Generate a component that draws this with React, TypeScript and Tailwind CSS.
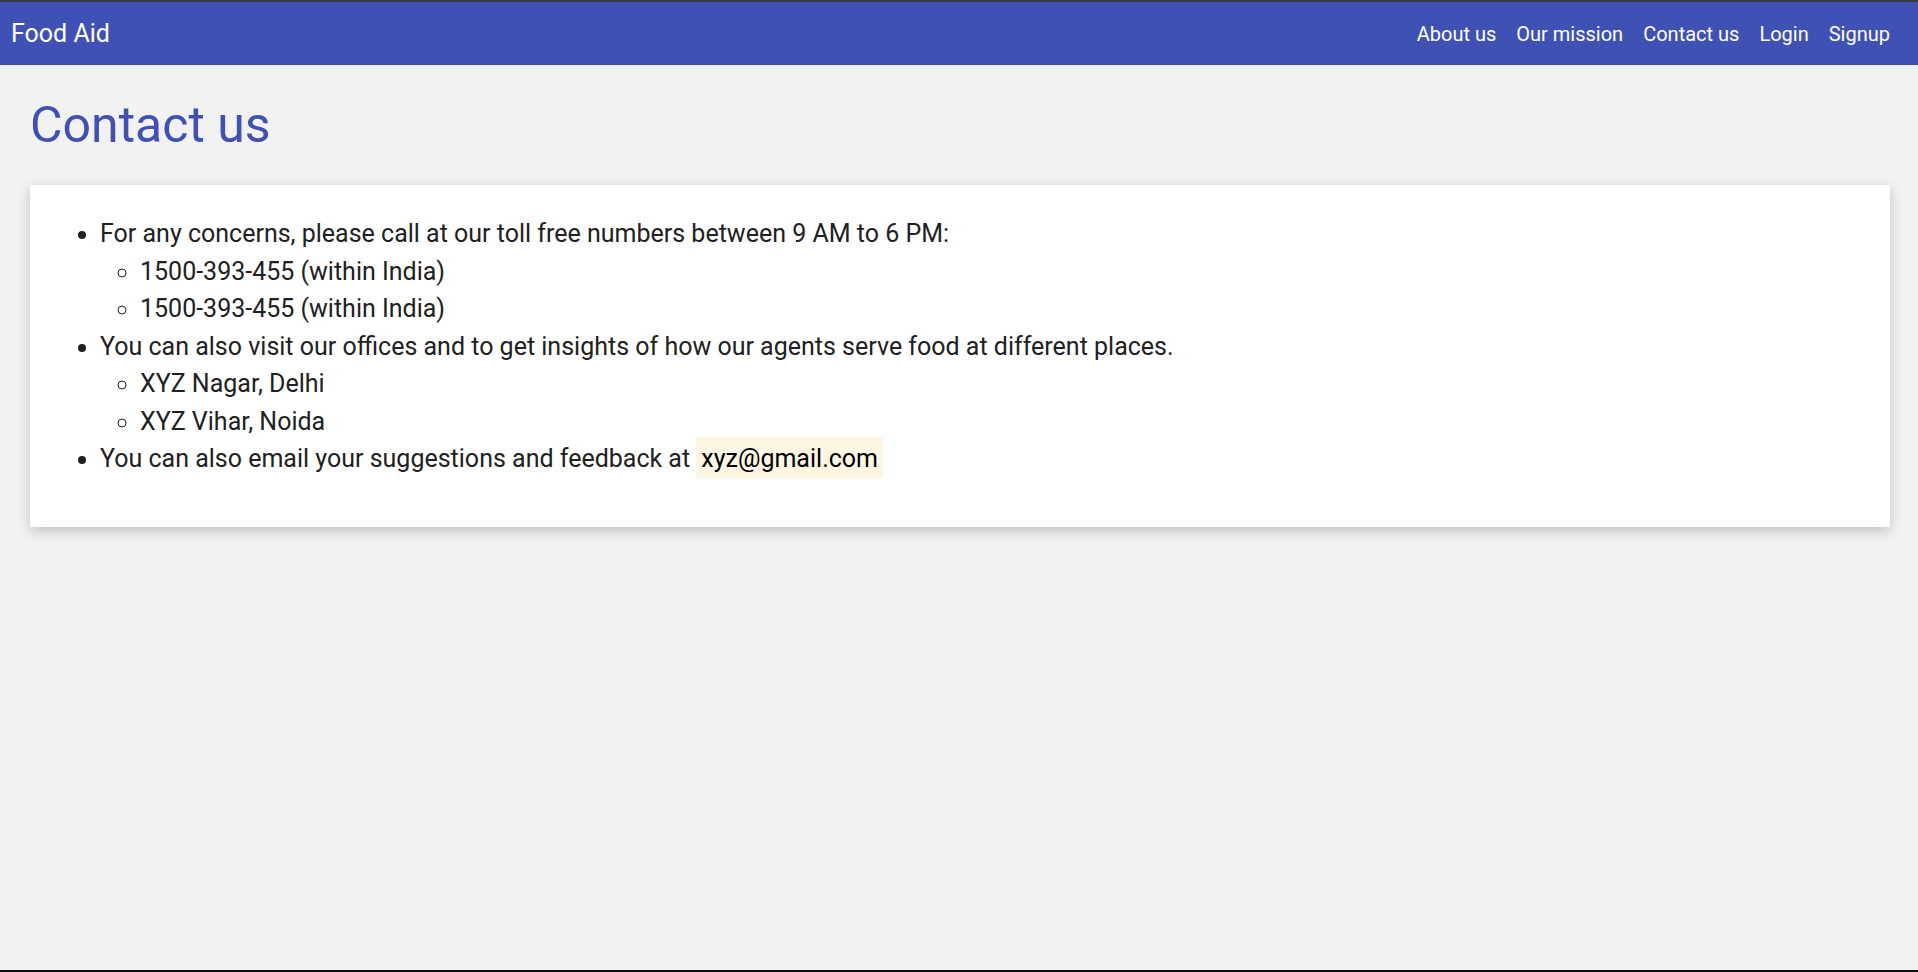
const navLinks = ['About us', 'Our mission', 'Contact us', 'Login', 'Signup']

export default function App() {
  return (
    <div
      className="h-[972px] flex flex-col bg-[#f2f2f2] border-t-2 border-b-2 border-t-[#3a3a3a] border-b-[#111]"
      style={{ fontFamily: 'Roboto, "Noto Sans", sans-serif' }}
    >
      {/* Top bar */}
      <nav className="h-[63px] shrink-0 bg-[#3f51b5] flex items-center justify-between pl-[11px] pr-[18px] text-white">
        <span className="text-[25px]">Food Aid</span>
        <ul className="flex items-center">
          {navLinks.map((link) => (
            <li key={link}>
              <a href="#" className="block px-[10px] text-[20px]">{link}</a>
            </li>
          ))}
        </ul>
      </nav>

      <main className="flex-1 pl-[30px] pr-[28px]">
        <h1 className="mt-[30px] text-[50px] leading-[60px] text-[#3f51b5]">Contact us</h1>

        <div className="mt-[30px] bg-white pt-[30px] pb-[49px] px-[30px] shadow-[0_4px_12px_rgba(0,0,0,0.2)] text-[#212121] text-[25px] leading-[37.5px]">
          <ul className="list-disc pl-[40px]">
            <li>
              For any concerns, please call at our toll free numbers between 9 AM to 6 PM:
              <ul className="list-[circle] pl-[40px]">
                <li>1500-393-455 (within India)</li>
                <li>1500-393-455 (within India)</li>
              </ul>
            </li>
            <li>
              You can also visit our offices and to get insights of how our agents serve food at different places.
              <ul className="list-[circle] pl-[40px]">
                <li>XYZ Nagar, Delhi</li>
                <li>XYZ Vihar, Noida</li>
              </ul>
            </li>
            <li>
              You can also email your suggestions and feedback at{' '}
              <span className="bg-[#fcf6e3] pt-[7px] pb-[5px] px-[5px] text-black">xyz@gmail.com</span>
            </li>
          </ul>
        </div>
      </main>
    </div>
  )
}
